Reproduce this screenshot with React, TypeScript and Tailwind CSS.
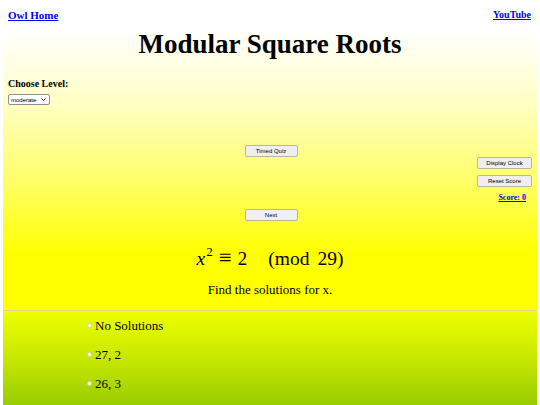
import React from "react";

const options = ["No Solutions", "27, 2", "26, 3"];

function QuizButton({ label, className = "" }: { label: string; className?: string }) {
  return (
    <button
      className={`block h-[12px] w-[53px] rounded-[2px] border border-[#b8b8a0] bg-[#efefef] text-[6px] leading-none text-black font-['Liberation_Sans',Arial,sans-serif] ${className}`}
    >
      {label}
    </button>
  );
}

export default function App() {
  return (
    <div className="h-[405px] w-[540px] overflow-hidden bg-white font-['Liberation_Serif','Times_New_Roman',serif] text-black">
      <header className="flex h-[29px] items-start justify-between px-[8px] pt-[8px]">
        <a href="#" className="text-[11px] font-bold leading-[14px] text-[#0000ee] underline">
          Owl Home
        </a>
        <a href="#" className="mr-[1px] text-[10px] font-bold leading-[14px] text-[#0000ee] underline">
          YouTube
        </a>
      </header>

      <main className="mx-[3px] h-[281px] bg-[linear-gradient(to_bottom,#ffffff_0%,#ffffc8_25%,#ffff70_52%,#ffff00_80%,#ffff00_100%)]">
        <h1 className="h-[30px] text-center text-[27px] font-bold leading-[30px]">Modular Square Roots</h1>

        <div className="mt-[19px] px-[5px]">
          <p className="h-[12px] text-[10px] font-bold leading-[12px]">Choose Level:</p>
          <div className="relative mt-[4px] h-[11px] w-[42px]">
            <select className="block h-[11px] w-[42px] appearance-none rounded-[2px] border border-[#8f8f8f] bg-white pl-[2px] text-[6px] leading-none font-['Liberation_Sans',Arial,sans-serif]">
              <option>moderate</option>
            </select>
            <svg
              viewBox="0 0 10 6"
              className="pointer-events-none absolute right-[4px] top-[4px] h-[3px] w-[5px]"
            >
              <path d="M1 1 L5 5 L9 1" fill="none" stroke="#222" strokeWidth="2" />
            </svg>
          </div>
        </div>

        <QuizButton label="Timed Quiz" className="mx-auto mt-[40px] translate-x-[1px]" />

        <div className="flex flex-col items-end pr-[5px]">
          <QuizButton label="Display Clock" className="w-[55px]" />
          <QuizButton label="Reset Score" className="mt-[6px] w-[55px]" />
          <a href="#" className="mt-[6px] mr-[6px] h-[10px] text-[8px] font-bold leading-[10px] text-[#0000ee] underline">
            Score: 0
          </a>
        </div>

        <QuizButton label="Next" className="mx-auto mt-[6px] translate-x-[1px]" />

        <div className="mt-[24px] flex h-[26px] items-baseline justify-center text-[19.5px] leading-[26px]">
          <span className="italic">x</span>
          <sup className="-top-[9px] ml-[1px] text-[13px]">2</sup>
          <span className="ml-[6px] text-[23px]">≡</span>
          <span className="ml-[6px]">2</span>
          <span className="ml-[21px]">(mod</span>
          <span className="ml-[8px]">29)</span>
        </div>

        <p className="mt-[11px] text-center text-[13px] leading-[16px]">Find the solutions for x.</p>
      </main>

      <section className="mx-[3px] h-[95px] border-t border-[#d8d890] bg-[linear-gradient(to_bottom,#eeff00_0%,#c8e800_50%,#99cc00_100%)] pl-[84px]">
        {options.map((o) => (
          <label key={o} className="flex h-[29px] items-center text-[13px] leading-[16px]">
            <span className="mr-[3px] inline-block h-[5px] w-[5px] rounded-full border border-[#ccc] bg-white" />
            {o}
          </label>
        ))}
      </section>
    </div>
  );
}
